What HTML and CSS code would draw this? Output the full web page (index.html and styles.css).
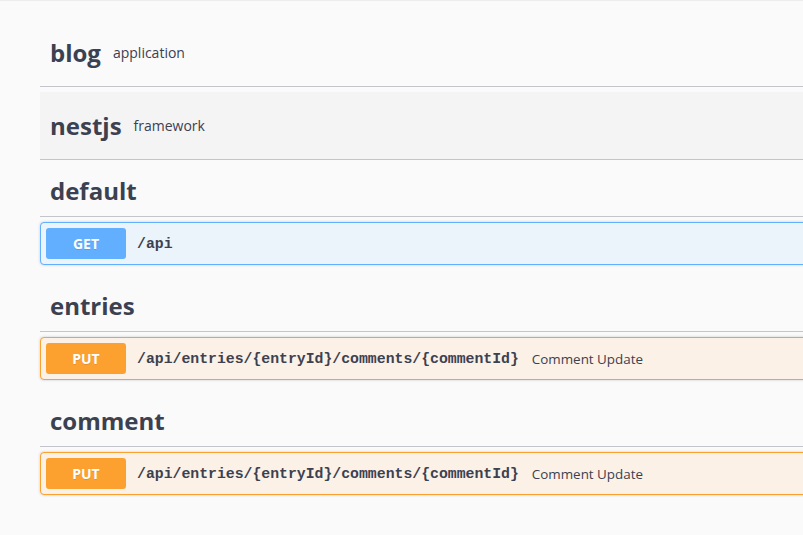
FILE: index.html
```html
<!DOCTYPE html>
<html>
<head>
<meta charset="utf-8">
<link rel="stylesheet" href="styles.css">
</head>
<body>
<div class="topshade"></div>
<div class="wrapper">
  <section class="tag-section">
    <h3 class="tag tag-desc"><span class="tag-name">blog</span><small class="tag-small">application</small></h3>
  </section>
  <section class="tag-section">
    <h3 class="tag tag-desc tag-hover"><span class="tag-name">nestjs</span><small class="tag-small">framework</small></h3>
  </section>
  <section class="tag-section">
    <h3 class="tag"><span class="tag-name">default</span></h3>
    <div class="opblock opblock-get">
      <div class="summary">
        <span class="method">GET</span>
        <span class="path">/api</span>
      </div>
    </div>
  </section>
  <section class="tag-section">
    <h3 class="tag"><span class="tag-name">entries</span></h3>
    <div class="opblock opblock-put">
      <div class="summary">
        <span class="method">PUT</span>
        <span class="path">/api/entries/{entryId}/comments/{commentId}</span>
        <span class="desc">Comment Update</span>
      </div>
    </div>
  </section>
  <section class="tag-section">
    <h3 class="tag"><span class="tag-name">comment</span></h3>
    <div class="opblock opblock-put">
      <div class="summary">
        <span class="method">PUT</span>
        <span class="path">/api/entries/{entryId}/comments/{commentId}</span>
        <span class="desc">Comment Update</span>
      </div>
    </div>
  </section>
</div>
</body>
</html>
```
FILE: styles.css
```css
html, body {
  margin: 0;
  padding: 0;
}
body {
  background: #fafafa;
  overflow: hidden;
  font-family: "Open Sans", "Noto Sans", sans-serif;
  color: #3b4151;
}
.topshade {
  height: 1px;
  background: #ededed;
}
.wrapper {
  padding: 18px 0 0 40px;
  width: 1100px;
}
.tag {
  box-sizing: border-box;
  display: flex;
  align-items: center;
  height: 52px;
  margin: 0 0 5px;
  padding: 0 10px;
  border-bottom: 1px solid #c4c5ca;
  font-size: 24px;
  font-weight: 700;
}
.tag-desc {
  height: 68px;
}
.tag-hover {
  background: #f4f4f4;
}
.tag-name {
  line-height: 31px;
}
.tag-small {
  font-size: 14px;
  font-weight: 400;
  line-height: 20px;
  padding: 0 0 0 12px;
  margin-top: 1px;
}
.opblock {
  margin: 0 0 15px;
  border: 1px solid #000;
  border-radius: 4px;
  box-shadow: 0 0 3px rgba(0, 0, 0, .19);
}
.summary {
  display: flex;
  align-items: center;
  padding: 5px;
}
.opblock-get {
  background: #ebf3fb;
  border-color: #61affe;
}
.opblock-get .method {
  background: #61affe;
}
.opblock-put {
  background: #fbf1e6;
  border-color: #fca130;
}
.opblock-put .method {
  background: #fca130;
}
.method {
  width: 80px;
  padding: 6px 0;
  line-height: 19px;
  text-align: center;
  border-radius: 3px;
  font-size: 14px;
  font-weight: 700;
  color: #fff;
  text-shadow: 0 1px 0 rgba(0, 0, 0, .1);
}
.path {
  padding: 0 13px 0 11px;
  font-family: "Liberation Mono", "DejaVu Sans Mono", monospace;
  font-size: 14.8px;
  font-weight: 700;
  color: #3b4151;
}
.desc {
  font-size: 13.4px;
  color: #3b4151;
}
```
